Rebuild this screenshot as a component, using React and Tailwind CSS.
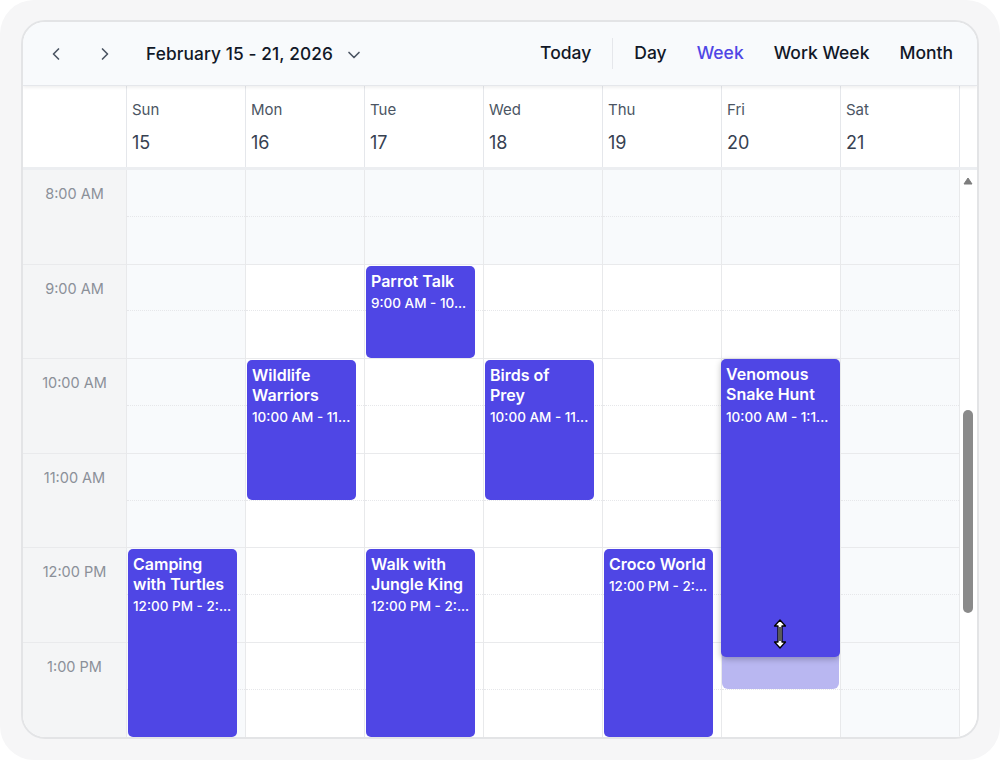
import React from "react";

const days = [
  { name: "Sun", num: 15, off: true },
  { name: "Mon", num: 16 },
  { name: "Tue", num: 17 },
  { name: "Wed", num: 18 },
  { name: "Thu", num: 19 },
  { name: "Fri", num: 20 },
  { name: "Sat", num: 21, off: true },
];

const hours = ["8:00 AM", "9:00 AM", "10:00 AM", "11:00 AM", "12:00 PM", "1:00 PM"];
const HOUR = 94.6;

// start / end in hours after 8:00
const events = [
  { day: 2, title: "Parrot Talk", time: "9:00 AM - 10...", start: 1, end: 2 },
  { day: 1, title: "Wildlife Warriors", time: "10:00 AM - 11...", start: 2, end: 3.5 },
  { day: 3, title: "Birds of Prey", time: "10:00 AM - 11...", start: 2, end: 3.5, narrow: true },
  { day: 0, title: "Camping with Turtles", time: "12:00 PM - 2:...", start: 4, end: 6 },
  { day: 2, title: "Walk with Jungle King", time: "12:00 PM - 2:...", start: 4, end: 6 },
  { day: 4, title: "Croco World", time: "12:00 PM - 2:...", start: 4, end: 6 },
];

function Chevron({ dir }) {
  const d = dir === "left" ? "M15 18l-6-6 6-6" : dir === "right" ? "M9 18l6-6-6-6" : "M6 9l6 6 6-6";
  return (
    <svg width="20" height="20" viewBox="0 0 24 24" fill="none" stroke="#4b5563" strokeWidth="2" strokeLinecap="round" strokeLinejoin="round">
      <path d={d} />
    </svg>
  );
}

function ResizeCursor() {
  return (
    <svg width="14" height="30" viewBox="0 0 14 30" className="absolute left-[52px] bottom-[8px]">
      <path
        d="M7 1 L12.5 7 L9 7 L9 23 L12.5 23 L7 29 L1.5 23 L5 23 L5 7 L1.5 7 Z"
        fill="#fff"
        stroke="#000"
        strokeWidth="1.3"
        strokeLinejoin="round"
      />
      <path d="M7 8 L7 22" stroke="#000" strokeWidth="1.3" />
    </svg>
  );
}

function EventCard({ ev }) {
  return (
    <div
      className="absolute left-[1px] w-[109px] rounded-[5px] bg-[#4f46e5] pl-[5px] pr-[4px] pt-[5px] text-white overflow-hidden"
      style={{ top: ev.start * HOUR + 1, height: (ev.end - ev.start) * HOUR - 2 }}
    >
      <div className={`text-[16px] font-semibold leading-[20px] ${ev.narrow ? "w-[90px]" : ""}`}>{ev.title}</div>
      <div className="mt-[2px] text-[13.5px] font-medium leading-[20px] whitespace-nowrap">{ev.time}</div>
    </div>
  );
}

export default function App() {
  return (
    <div className="w-[1000px] h-[760px] bg-white" style={{ fontFamily: "Inter, 'Noto Sans', sans-serif" }}>
      <div className="w-full h-full rounded-[34px] bg-[#f6f6f7] pt-[20px] px-[21px]">
        <div className="w-[958px] h-[719px] rounded-[24px] border-2 border-[#e3e4e6] bg-white overflow-hidden flex flex-col">
          {/* Toolbar */}
          <div className="h-[64px] shrink-0 bg-[#f8fafc] border-b border-[#e5e7eb] shadow-[0_2px_3px_rgba(0,0,0,0.06)] flex items-center pl-[23px] pr-[24px] relative z-10">
            <button className="w-[20px] h-[20px] flex items-center justify-center">
              <Chevron dir="left" />
            </button>
            <button className="ml-[29px] w-[20px] h-[20px] flex items-center justify-center">
              <Chevron dir="right" />
            </button>
            <div className="ml-[31px] text-[17.3px] font-medium text-[#111827] tracking-[0.1px]">February 15 - 21, 2026</div>
            <div className="ml-[11px] mt-[2px]">
              <Chevron dir="down" />
            </div>
            <div className="ml-auto flex items-center text-[17.5px] font-medium text-[#111827]">
              <span>Today</span>
              <span className="ml-[21px] mr-[21px] w-px h-[31px] bg-[#e5e7eb]"></span>
              <span>Day</span>
              <span className="ml-[30px] text-[#4f46e5]">Week</span>
              <span className="ml-[30px]">Work Week</span>
              <span className="ml-[30px]">Month</span>
            </div>
          </div>

          {/* Day header */}
          <div className="h-[84px] shrink-0 flex border-b-[3px] border-[#eceef1]">
            <div className="w-[103px] shrink-0"></div>
            {days.map((d) => (
              <div key={d.name} className="w-[119px] shrink-0 border-l border-[#e5e7eb] pl-[5px] pt-[14px]">
                <div className="text-[15px] text-[#4b5563] leading-[20px]">{d.name}</div>
                <div className="mt-[12px] text-[18px] text-[#374151] leading-[22px]">{d.num}</div>
              </div>
            ))}
            <div className="w-[18px] shrink-0 border-l border-[#e5e7eb]"></div>
          </div>

          {/* Grid */}
          <div className="flex-1 flex overflow-hidden">
            <div className="w-[103px] shrink-0 bg-[#f4f5f6]">
              {hours.map((h) => (
                <div key={h} className="h-[94.6px] border-b border-[#e9eaec] pt-[13px] text-center text-[14.5px] text-[#8b9099]">
                  {h}
                </div>
              ))}
            </div>
            {days.map((d, di) => (
              <div key={d.name} className="relative w-[119px] shrink-0 border-l border-[#e8e9eb]">
                {hours.map((h, hi) => (
                  <div
                    key={h}
                    className={`h-[94.6px] border-b border-[#e9eaec] flex flex-col ${d.off || hi === 0 ? "bg-[#f8fafc]" : "bg-white"}`}
                  >
                    <div className="h-1/2 border-b border-dotted border-[#e6e7ea]"></div>
                  </div>
                ))}
                {events
                  .filter((e) => e.day === di)
                  .map((e) => (
                    <EventCard key={e.title} ev={e} />
                  ))}
                {di === 5 && (
                  <>
                    <div
                      className="absolute left-[0px] w-[117px] rounded-[6px] bg-[#b9b7f1]"
                      style={{ top: 2 * HOUR, height: 3.5 * HOUR - 1 }}
                    ></div>
                    <div
                      className="absolute left-[-1px] w-[119px] rounded-[5px] bg-[#4f46e5] px-[5px] pt-[5px] text-white shadow-[0_2px_6px_rgba(0,0,0,0.25)]"
                      style={{ top: 2 * HOUR, height: 298 }}
                    >
                      <div className="text-[16px] font-semibold leading-[20px]">Venomous Snake Hunt</div>
                      <div className="mt-[3px] text-[13.5px] font-medium leading-[20px]">10:00 AM - 1:1...</div>
                      <ResizeCursor />
                    </div>
                  </>
                )}
              </div>
            ))}
            {/* scrollbar */}
            <div className="w-[18px] shrink-0 border-l border-[#e8e9eb] bg-white relative">
              <svg width="10" height="8" viewBox="0 0 10 8" className="absolute left-[3px] top-[7px]">
                <path d="M5 1 L9 7 L1 7 Z" fill="#7d7d7d" stroke="#7d7d7d" strokeWidth="1" strokeLinejoin="round" />
              </svg>
              <div className="absolute left-[3px] top-[240px] w-[10px] h-[203px] rounded-full bg-[#8a8a8a]"></div>
            </div>
          </div>
        </div>
      </div>
    </div>
  );
}
